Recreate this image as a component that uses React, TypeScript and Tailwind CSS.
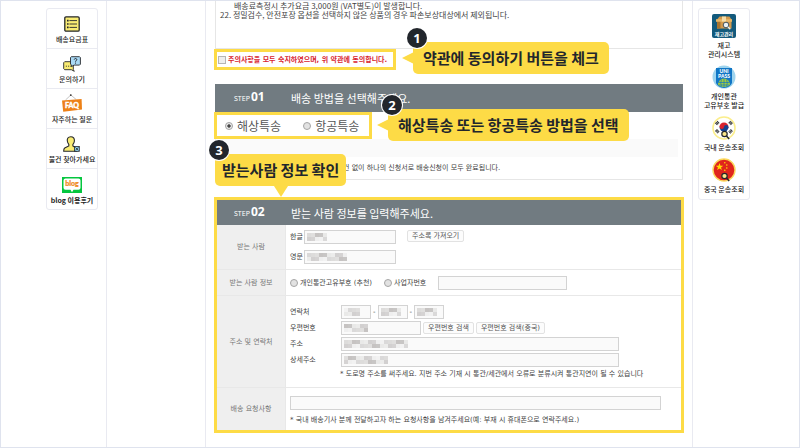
import clsx from 'clsx';
import React from 'react';

const SMALL_TEXT = "font-['DejaVu_Sans','Noto_Sans_CJK_KR',sans-serif] text-[7px] leading-[10px]";

const FeeTableIcon = () => (
  <svg viewBox="0 0 16 16" className="size-4">
    <rect x="0.8" y="0.8" width="14.4" height="14.4" rx="1.2" fill="#f9ec73" stroke="#25272b" strokeWidth="1.3" />
    <path d="M3 4.6h1.6M3 8h1.6M3 11.4h1.6" stroke="#25272b" strokeWidth="1.6" />
    <path d="M5.4 4.6H13M5.4 8H13M5.400 11.4H13" stroke="#25272b" strokeWidth="0.9" />
  </svg>
);

const InquiryIcon = () => (
  <svg viewBox="0 0 18 16" className="h-4 w-[18px]">
    <path d="M1.7 5.7h8.6v8l1 1.6-3-1.6H1.7l-1-1v-6z" fill="#f9ec73" stroke="#25272b" strokeWidth="0.9" />
    <path d="M2.800 10.200h1.200M5 10.200h1.200M7.200 10.200h1.200" stroke="#25272b" strokeWidth="0.8" />
    <path d="M8.3.7h8.2l.9.9v6.6l-.9.9H11L8.4 10.6V9l-.9-.9V1.6z" fill="#a9d9f5" stroke="#25272b" strokeWidth="0.9" />
    <path d="M11.2 3.6c.2-1.500 2.700-1.400 2.600.1 0 1-1.300.9-1.300 2M12.500 6.600v1" fill="none" stroke="#25272b" strokeWidth="1" />
  </svg>
);

const FaqIcon = () => (
  <svg viewBox="0 0 20 18" className="h-[18px] w-5">
    <path d="M3.5 6 8.8 1l5.5 4.6" fill="none" stroke="#9b9b9b" strokeWidth="0.6" />
    <circle cx="8.8" cy="1.1" r="0.9" fill="#34302d" />
    <path d="M0 6.6 19.6 5l.4 10.6-18.8 2.2z" fill="#ed8117" />
    <text x="10" y="14" fontSize="7" fontWeight="900" textAnchor="middle" fill="#fff" stroke="#fff" strokeWidth="0.4" fontFamily="Lato, sans-serif">
      FAQ
    </text>
  </svg>
);

const LostItemIcon = () => (
  <svg viewBox="0 0 18 16" className="h-4 w-[18px]">
    <path
      d="M7.800.7C5 .7 4 2.800 4.300 5c.2 1.700.9 2.600 1.500 3.300v1.600L1.700 12C.9 12.500.7 13.500.7 15.200h13.200V12.500L9.900 10V8.300C10.700 7.500 11.300 6.500 11.400 5 11.600 2.500 10.400.7 7.800.7z"
      fill="#f9ec73"
      stroke="#25272b"
      strokeWidth="1.1"
    />
    <rect x="11.500" y="10.500" width="4.800" height="4.800" fill="#8fd0ee" stroke="#25272b" strokeWidth="0.8" />
    <path d="m12.400 11.400 3 3m0-3-3 3" stroke="#25272b" strokeWidth="0.8" />
  </svg>
);

const BlogIcon = () => (
  <svg viewBox="0 0 20 16" className="h-4 w-5">
    <rect width="20" height="16" fill="#05c63f" />
    <path d="M3.500 1.500h13a2 2 0 0 1 2 2v7.200a2 2 0 0 1-2 2H11.500L10 15.200l-1.500-2.500h-5a2 2 0 0 1-2-2V3.500a2 2 0 0 1 2-2z" fill="#fff" />
    <text x="10" y="9.200" fontSize="7" fontWeight="900" textAnchor="middle" fill="#f08a1c" stroke="#f08a1c" strokeWidth="0.2" fontFamily="Lato, sans-serif">
      blog
    </text>
  </svg>
);

const StockIcon = () => (
  <svg viewBox="0 0 24 24" className="size-6">
    <rect width="24" height="24" rx="2" fill="#135a7c" />
    <path d="M5 5.500 7.500 2.500h10l2 3v9H5z" fill="#d39a4d" />
    <path d="M4 5.200h16v2.600H4z" fill="#e9b869" />
    <path d="M10 2.500h4v5h-4z" fill="#f5dca6" />
    <path d="M5 7.800h3.500v6.700H5z" fill="#a8742f" />
    <circle cx="14" cy="11" r="2.800" fill="#eaf2f6" stroke="#46545c" strokeWidth="1" />
    <path d="m16 13 2.300 2.200" stroke="#eaf2f6" strokeWidth="1.300" />
    <text x="12" y="21.500" fontSize="5" fontWeight="700" textAnchor="middle" fill="#fff" fontFamily="Noto Sans CJK KR, sans-serif">
      재고관리
    </text>
  </svg>
);

const UnipassIcon = () => (
  <svg viewBox="0 0 24 24" className="size-6">
    <circle cx="12" cy="12" r="11.500" fill="#9fd4ee" />
    <path d="M4 3h16v15q-2 4.500-8 5-6-.5-8-5z" fill="#1176c6" />
    <g fontSize="5" fontWeight="900" textAnchor="middle" fill="#fff" fontFamily="Lato, sans-serif">
      <text x="12" y="8">UNI</text>
      <text x="12" y="12.500">PASS</text>
    </g>
    <path d="M6 20a6 6.500 0 0 1 12 0q-6 4-12 0z" fill="#a5cf3a" />
    <path d="M12 13.500V22M6.500 17.500h11M6.500 20h11M9.500 14.500q-1.500 3.500 0 7M14.500 14.500q1.500 3.500 0 7" fill="none" stroke="#1176c6" strokeWidth="0.700" />
  </svg>
);

const Lens = () => (
  <g stroke="#25272b" strokeWidth="1.200">
    <circle cx="12.500" cy="18" r="2.700" fill="#fbe88a" />
    <path d="m14.500 20 2.700 3" strokeWidth="1.500" />
  </g>
);

const KoreaIcon = () => (
  <svg viewBox="0 0 24 24" className="size-6">
    <circle cx="12" cy="12" r="11" fill="#fff" stroke="#fbee8d" strokeWidth="1.600" />
    <path d="M7.500 11a4.500 4.500 0 0 1 9 0z" fill="#d8232e" />
    <path d="M7.500 11a4.500 4.500 0 0 0 9 0z" fill="#15428f" />
    <circle cx="9.800" cy="10.800" r="2.200" fill="#d8232e" />
    <circle cx="14.200" cy="11.200" r="2.200" fill="#15428f" />
    <g stroke="#25272b" strokeWidth="3" strokeDasharray="0.900 0.400">
      <path d="m4 8.300 2.600-2.600" />
      <path d="M17.400 5.700 20 8.300" />
      <path d="m4 14 2.600 2.600" />
      <path d="M17.400 16.600 20 14" />
    </g>
    <Lens />
  </svg>
);

const ChinaIcon = () => (
  <svg viewBox="0 0 24 24" className="size-6">
    <circle cx="12" cy="12" r="11" fill="#e0261c" stroke="#fbd95b" strokeWidth="1.400" />
    <path d="m7.500 5 1 2.700h2.800L9 9.400l.9 2.700-2.400-1.700-2.400 1.700.9-2.700-2.300-1.700h2.800z" fill="#ffde00" />
    <g fill="#ffde00">
      <circle cx="12.800" cy="4.700" r="0.800" />
      <circle cx="14.800" cy="7" r="0.800" />
      <circle cx="14.800" cy="10" r="0.800" />
      <circle cx="12.800" cy="12.300" r="0.800" />
    </g>
    <Lens />
  </svg>
);

const leftLinks = [
  { label: '배송요금표', icon: <FeeTableIcon /> },
  { label: '문의하기', icon: <InquiryIcon /> },
  { label: '자주하는 질문', icon: <FaqIcon /> },
  { label: '물건 찾아가세요', icon: <LostItemIcon /> },
  { label: 'blog 이용후기', icon: <BlogIcon />, bold: true },
];

const rightLinks = [
  { lines: ['재고', '관리시스템'], icon: <StockIcon /> },
  { lines: ['개인통관', '고유부호 발급'], icon: <UnipassIcon /> },
  { lines: ['국내 운송조회'], icon: <KoreaIcon /> },
  { lines: ['중국 운송조회'], icon: <ChinaIcon /> },
];

interface CalloutProps {
  step: number;
  arrow: 'left' | 'bottom';
  className: string;
  children: React.ReactNode;
}

const Callout: React.FC<CalloutProps> = ({ step, arrow, className, children }) => (
  <div
    className={clsx(
      "absolute z-10 flex h-8 items-center rounded-[5px] bg-[#fddb46] font-['Noto_Sans_CJK_KR',sans-serif] text-[15px] font-bold whitespace-nowrap text-[#22262c]",
      className,
    )}
  >
    {arrow === 'left' ? (
      <svg viewBox="0 0 12 12" className="absolute top-[10px] right-full -mr-px size-3">
        <path d="M0 6 12 0v12z" fill="#fddb46" />
      </svg>
    ) : (
      <svg viewBox="0 0 14 11" className="absolute top-full left-[59px] h-[11px] w-[14px]">
        <path d="M0 0h14L7 11z" fill="#fddb46" />
      </svg>
    )}
    <span className="absolute -top-[14px] -left-[6px] flex size-5 items-center justify-center rounded-full bg-[#22262c] font-['Noto_Sans'] text-[13px] leading-none text-white ring-1 ring-white">
      {step}
    </span>
    {children}
  </div>
);

const StepHeader = ({ no, title, className }: { no: string; title: string; className: string }) => (
  <h2 className={clsx("flex items-center bg-[#717b81] font-['Noto_Sans_CJK_KR',sans-serif] text-white", className)}>
    <span className="flex w-[57px] items-baseline gap-px font-['Noto_Sans']">
      <span className="text-[7px]">STEP</span>
      <span className="text-[12px] font-bold">{no}</span>
    </span>
    <span className="text-[11px]">{title}</span>
  </h2>
);

const Radio = (props: React.InputHTMLAttributes<HTMLInputElement>) => (
  <input
    type="radio"
    className="size-2 shrink-0 appearance-none rounded-full border border-[#a5a5a5] bg-[#e2e2e2] checked:bg-[radial-gradient(circle,#444_30%,#e8e8e8_50%)]"
    {...props}
  />
);

const SHADES = [0.2, 0.38, 0.1, 0.28, 0.06, 0.22, 0.4, 0.12, 0.3, 0.08, 0.24];

// Personal data is hidden behind a grey mosaic of `cells` columns.
const MaskedInput = ({ label, className, cells = 0 }: { label: string; className: string; cells?: number }) => (
  <span className={clsx('relative flex h-[14px]', className)}>
    <input aria-label={label} className="h-full w-full min-w-0 border border-[#d3d3d3] bg-[#fafafa] px-1 text-[7px]" />
    {cells > 0 && (
      <svg
        viewBox={`0 0 ${cells * 4} 8`}
        className="pointer-events-none absolute top-[3px] left-[3px] h-2"
        style={{ width: cells * 4 }}
      >
        {Array.from({ length: cells * 2 }, (_, i) => (
          <rect
            key={i}
            x={(i >> 1) * 4}
            y={(i % 2) * 4}
            width="4"
            height="4"
            fill="#77716f"
            opacity={SHADES[(i * 3 + cells) % SHADES.length]}
          />
        ))}
      </svg>
    )}
  </span>
);

const SmallButton = ({ children }: { children: React.ReactNode }) => (
  <button
    type="button"
    className="h-3 rounded-[2px] border border-[#e2e2e2] bg-[#fcfcfc] px-1 leading-[10px] whitespace-nowrap text-[#555]"
  >
    {children}
  </button>
);

const FormRow = ({ label, className, children }: { label: string; className: string; children: React.ReactNode }) => (
  <div className="grid grid-cols-[69px_1fr] border-b border-[#e8e8e8] last:border-b-0">
    <div className="flex items-center justify-center border-r border-[#e8e8e8] bg-[#efefef] text-[#777]">{label}</div>
    <div className={clsx('flex min-w-0 pl-1', className)}>{children}</div>
  </div>
);

const AddressLine = ({ label, children }: { label: string; children: React.ReactNode }) => (
  <div className="flex items-center">
    <span className="w-[51px] shrink-0">{label}</span>
    {children}
  </div>
);

export default function App() {
  return (
    <div className="flex min-h-screen border border-[#dfe3ee] bg-white font-['Noto_Sans_CJK_KR',sans-serif] text-[#444]">
      <aside className="w-[106px] shrink-0 border-r border-[#e9eaf1] pt-[7px] pr-2 pl-[45px]">
        <nav className="divide-y divide-[#e9eaf1] rounded-[3px] border border-[#e9eaf1] text-[7px] leading-[10px]">
          {leftLinks.map(({ label, icon, bold }) => (
            <a
              key={label}
              href="#"
              className={clsx('flex h-10 flex-col items-center justify-end gap-[2px] pb-1 whitespace-nowrap text-[#222]', bold ? 'font-bold' : 'font-medium')}
            >
              {icon}
              {label}
            </a>
          ))}
        </nav>
      </aside>

      <main className={clsx('ml-[98px] min-w-0 flex-1 border-x border-[#e9eaf1] px-2 pb-3', SMALL_TEXT)}>
        <div className="mx-px h-12 border-x border-b border-[#e6e6e6] pl-1 font-['Noto_Sans_CJK_KR'] text-[8px] leading-[9px] whitespace-nowrap">
          <p className="pl-[14px]">배송료측정시 추가요금 3,000원 (VAT별도)이 발생합니다.</p>
          <p>22. 정밀검수, 안전포장 옵션을 선택하지 않은 상품의 경우 파손보상대상에서 제외됩니다.</p>
        </div>

        <div className="relative flex h-[21px] w-[182px] items-center border-3 border-[#fddb46]">
          <label className="flex items-center gap-[2px] pl-px font-bold whitespace-nowrap text-[#d8232e]">
            <input type="checkbox" className="size-2 appearance-none border border-[#b5b5b5] bg-[#eee]" />
            주의사항을 모두 숙지하였으며, 위 약관에 동의합니다.
          </label>
          <Callout step={1} arrow="left" className="-top-[10px] left-[196px] px-[10px]">
            약관에 동의하기 버튼을 체크
          </Callout>
        </div>

        <section className="mt-[14px]">
          <StepHeader no="01" title="배송 방법을 선택해주세요." className="mx-px h-7 pl-[19px]" />
          <div className="relative mx-px h-[68px] border-x border-b border-[#e6e6e6]">
            <div className="relative -ml-[2px] flex h-[27px] w-[158px] items-center gap-[22px] border-3 border-[#fddb46] bg-white pl-2 font-['Noto_Sans_CJK_KR'] text-[12px] text-[#555]">
              <label className="flex items-center gap-1 whitespace-nowrap">
                <Radio name="method" defaultChecked />
                해상특송
              </label>
              <label className="flex items-center gap-1 whitespace-nowrap">
                <Radio name="method" />
                항공특송
              </label>
              <Callout step={2} arrow="left" className="-top-[6px] left-[171px] px-[10px]">
                해상특송 또는 항공특송 방법을 선택
              </Callout>
            </div>
            <div className="mr-1 h-[18px] bg-[#fafafa]" />
            <p className="pt-[6px] pl-[127px] whitespace-nowrap">건 없이 하나의 신청서로 배송신청이 모두 완료됩니다.</p>
            <Callout step={3} arrow="bottom" className="top-[42px] -left-px px-[7px]">
              받는사람 정보 확인
            </Callout>
          </div>
        </section>

        <section className="mt-[17px] border-3 border-[#fddb46]">
          <StepHeader no="02" title="받는 사람 정보를 입력해주세요." className="h-[25px] pl-[17px]" />

          <FormRow label="받는 사람" className="h-11 items-start gap-[11px] pt-[5px]">
            <div className="space-y-[6px]">
              <div className="flex items-center gap-px">
                <span className="w-[13px]">한글</span>
                <MaskedInput label="한글" className="w-[92px]" cells={5} />
              </div>
              <div className="flex items-center gap-px">
                <span className="w-[13px]">영문</span>
                <MaskedInput label="영문" className="w-[92px]" cells={10} />
              </div>
            </div>
            <SmallButton>주소록 가져오기</SmallButton>
          </FormRow>

          <FormRow label="받는 사람 정보" className="h-[25px] items-center gap-3 whitespace-nowrap">
            <label className="flex items-center gap-[2px]">
              <Radio name="idType" />
              개인통관고유부호 (추천)
            </label>
            <label className="flex items-center gap-[2px]">
              <Radio name="idType" />
              사업자번호
            </label>
            <MaskedInput label="번호" className="w-[129px]" />
          </FormRow>

          <FormRow label="주소 및 연락처" className="h-[91px] flex-col gap-[2px] pt-[9px]">
            <AddressLine label="연락처">
              <div className="flex items-center gap-[2px]">
                <MaskedInput label="연락처 1" className="w-[30px]" cells={4} />-
                <MaskedInput label="연락처 2" className="w-[30px]" cells={5} />-
                <MaskedInput label="연락처 3" className="w-[30px]" cells={5} />
              </div>
            </AddressLine>
            <AddressLine label="우편번호">
              <div className="flex items-center gap-[2px]">
                <MaskedInput label="우편번호" className="w-20" cells={6} />
                <SmallButton>우편번호 검색</SmallButton>
                <SmallButton>우편번호 검색(중국)</SmallButton>
              </div>
            </AddressLine>
            <AddressLine label="주소">
              <MaskedInput label="주소" className="mr-[62px] flex-1" cells={16} />
            </AddressLine>
            <AddressLine label="상세주소">
              <MaskedInput label="상세주소" className="mr-[62px] flex-1" cells={11} />
            </AddressLine>
            <p className="pl-[50px] whitespace-nowrap">
              * 도로명 주소를 써주세요. 지번 주소 기재 시 통관/세관에서 오류로 분류시켜 통관지연이 될 수 있습니다
            </p>
          </FormRow>

          <FormRow label="배송 요청사항" className="h-[42px] flex-col gap-[5px] pt-2">
            <MaskedInput label="배송 요청사항" className="mr-5" />
            <p className="whitespace-nowrap">
              * 국내 배송기사 분께 전달하고자 하는 요청사항을 남겨주세요(예: 부재 시 휴대폰으로 연락주세요.)
            </p>
          </FormRow>
        </section>
      </main>

      <aside className="w-[106px] shrink-0 pt-[7px] pr-[49px] pl-[5px]">
        <nav className="flex flex-col gap-[6px] rounded-[3px] border border-[#e9eaf1] py-[5px] text-[7px] leading-[9px] font-medium">
          {rightLinks.map(({ lines, icon }) => (
            <a key={lines[0]} href="#" className="flex flex-col items-center gap-[3px] whitespace-nowrap text-[#222]">
              {icon}
              <span className="text-center">
                {lines.map((line) => (
                  <span key={line} className="block">
                    {line}
                  </span>
                ))}
              </span>
            </a>
          ))}
        </nav>
      </aside>
    </div>
  );
}
